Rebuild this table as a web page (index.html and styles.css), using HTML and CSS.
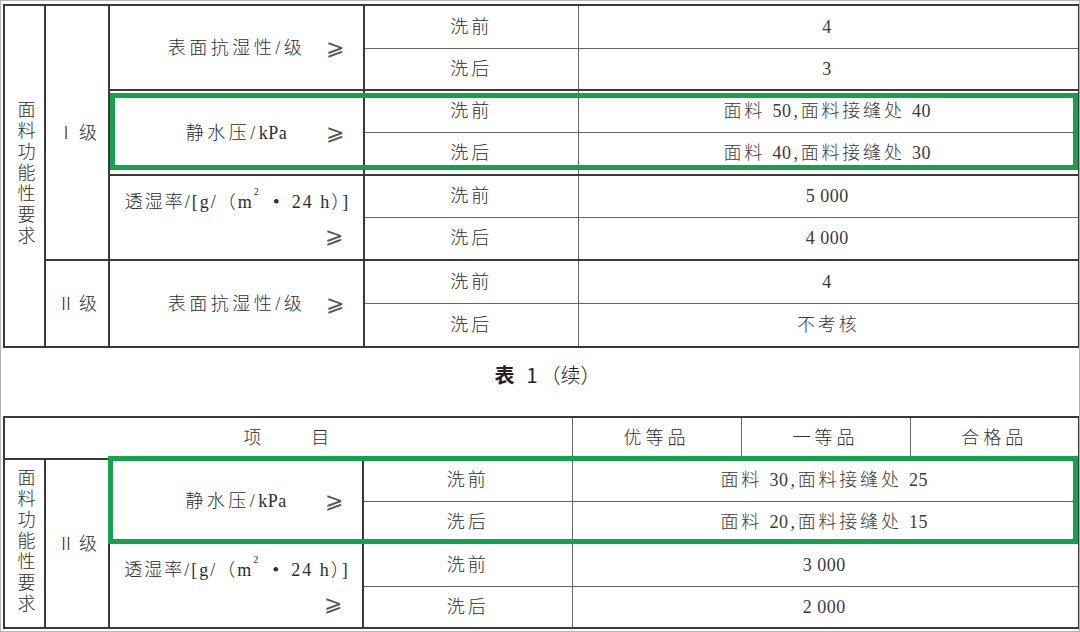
FILE: index.html
```html
<!DOCTYPE html>
<html lang="zh">
<head>
<meta charset="utf-8">
<title>表 1（续）</title>
<link rel="stylesheet" href="styles.css">
</head>
<body>
<div class="page">
  <div class="tbl-wrap tbl-top">
    <table class="spec">
      <colgroup>
        <col class="c-vert"><col class="c-lvl"><col class="c-item"><col class="c-wash-a"><col class="c-val-a">
      </colgroup>
      <tr class="r43">
        <td class="vert" rowspan="8"><span class="vtext">面料功能性要求</span></td>
        <td class="lvl" rowspan="6">Ⅰ级</td>
        <td class="item" rowspan="2"><div class="lab"><span class="t">表面抗湿性/级</span><span class="ge">⩾</span></div></td>
        <td class="wash">洗前</td>
        <td class="val">4</td>
      </tr>
      <tr class="r42">
        <td class="wash">洗后</td>
        <td class="val">3</td>
      </tr>
      <tr class="r42 grp">
        <td class="item" rowspan="2"><div class="lab"><span class="t">静水压/<span class="lat">kPa</span></span><span class="ge">⩾</span></div></td>
        <td class="wash">洗前</td>
        <td class="val">面料 <span class="num">50</span>,面料接缝处 <span class="num">40</span></td>
      </tr>
      <tr class="r43">
        <td class="wash">洗后</td>
        <td class="val">面料 <span class="num">40</span>,面料接缝处 <span class="num">30</span></td>
      </tr>
      <tr class="r42 grp">
        <td class="item" rowspan="2"><div class="lab2"><div class="t">透湿率/[g/（m<sup>2</sup> <span class="dot">·</span> 24 h）]</div><div class="ge">⩾</div></div></td>
        <td class="wash">洗前</td>
        <td class="val"><span class="num">5 000</span></td>
      </tr>
      <tr class="r43">
        <td class="wash">洗后</td>
        <td class="val"><span class="num">4 000</span></td>
      </tr>
      <tr class="r43 grp">
        <td class="lvl" rowspan="2">Ⅱ级</td>
        <td class="item" rowspan="2"><div class="lab"><span class="t">表面抗湿性/级</span><span class="ge">⩾</span></div></td>
        <td class="wash">洗前</td>
        <td class="val">4</td>
      </tr>
      <tr class="r44">
        <td class="wash">洗后</td>
        <td class="val">不考核</td>
      </tr>
    </table>
    <div class="mark mark-top"></div>
  </div>

  <div class="caption"><span class="cap-b">表</span><span class="cap-n">1</span><span class="cap-l">（续）</span></div>

  <div class="tbl-wrap tbl-bot">
    <table class="spec">
      <colgroup>
        <col class="c-vert"><col class="c-lvl"><col class="c-item-b"><col class="c-wash-b"><col class="c-grade"><col class="c-grade"><col class="c-grade">
      </colgroup>
      <tr class="r42 head">
        <td colspan="4" class="proj"><span>项</span><span>目</span></td>
        <td>优等品</td>
        <td>一等品</td>
        <td>合格品</td>
      </tr>
      <tr class="r42 grp">
        <td class="vert" rowspan="4"><span class="vtext">面料功能性要求</span></td>
        <td class="lvl" rowspan="4">Ⅱ级</td>
        <td class="item" rowspan="2"><div class="lab"><span class="t">静水压/<span class="lat">kPa</span></span><span class="ge">⩾</span></div></td>
        <td class="wash">洗前</td>
        <td class="val" colspan="3">面料 <span class="num">30</span>,面料接缝处 <span class="num">25</span></td>
      </tr>
      <tr class="r42">
        <td class="wash">洗后</td>
        <td class="val" colspan="3">面料 <span class="num">20</span>,面料接缝处 <span class="num">15</span></td>
      </tr>
      <tr class="r43 grp">
        <td class="item" rowspan="2"><div class="lab2"><div class="t">透湿率/[g/（m<sup>2</sup> <span class="dot">·</span> 24 h）]</div><div class="ge">⩾</div></div></td>
        <td class="wash">洗前</td>
        <td class="val" colspan="3"><span class="num">3 000</span></td>
      </tr>
      <tr class="r42">
        <td class="wash">洗后</td>
        <td class="val" colspan="3"><span class="num">2 000</span></td>
      </tr>
    </table>
    <div class="mark mark-bot"></div>
  </div>
</div>
</body>
</html>
```

FILE: styles.css
```css
html, body {
  margin: 0;
  padding: 0;
  background: #ffffff;
}

.page {
  width: 1080px;
  height: 632px;
  box-sizing: border-box;
  border: 1px solid #b4b4b4;
  padding: 3px 1px 0 2px;
  overflow: hidden;
  font-family: "Liberation Serif", "Noto Sans CJK SC", serif;
  font-weight: 300;
  color: #2e2e2e;
  background: #ffffff;
}

.tbl-wrap {
  position: relative;
  width: 1075px;
}

.spec {
  width: 1075px;
  table-layout: fixed;
  border-collapse: collapse;
  border: 2px solid #3a3a3a;
  font-size: 18px;
  letter-spacing: 2px;
}

.c-vert { width: 41px; }
.c-lvl { width: 64px; }
.c-item { width: 255px; }
.c-item-b { width: 254px; }
.c-wash-a { width: 214px; }
.c-val-a { width: 501px; }
.c-wash-b { width: 209px; }
.c-grade { width: 169px; }

.spec td {
  border: 1px solid #666666;
  padding: 0;
  text-align: center;
  vertical-align: middle;
  line-height: 22px;
}

.spec tr.grp td {
  border-top: 2px solid #3a3a3a;
}

.spec td.vert,
.spec td.lvl,
.spec td.item {
  border-left: 2px solid #3a3a3a;
  border-right: 2px solid #3a3a3a;
}

.r42 { height: 42px; }
.r43 { height: 43px; }
.r44 { height: 44px; }

.vtext {
  display: inline-block;
  writing-mode: vertical-rl;
  line-height: 18px;
  letter-spacing: 3px;
}

.lvl {
  letter-spacing: 4px;
  padding-left: 4px !important;
}

.lab {
  display: grid;
  grid-template-columns: 1fr auto 1fr;
  align-items: center;
  letter-spacing: 3.5px;
}

.lab .t {
  grid-column: 2;
}

.lat {
  letter-spacing: 0.5px;
}

.num {
  letter-spacing: 0.5px;
  margin-right: 2px;
}

.lab .ge,
.lab2 .ge {
  font-family: "DejaVu Sans", "Noto Sans CJK SC", sans-serif;
  font-size: 22px;
  color: #555555;
  letter-spacing: 0;
}

.lab .ge {
  grid-column: 3;
  justify-self: end;
  margin-right: 19px;
}

.lab2 {
  display: flex;
  flex-direction: column;
  letter-spacing: 2px;
}

.lab2 .t {
  line-height: 34px;
  padding-left: 2px;
  white-space: nowrap;
}

.lab2 .ge {
  line-height: 34px;
  text-align: right;
  padding-right: 20px;
}

.dot {
  font-family: "Noto Sans CJK SC", sans-serif;
  font-weight: 700;
  letter-spacing: 0;
}

sup {
  font-size: 10px;
  vertical-align: top;
  line-height: 18px;
}

.wash {
  letter-spacing: 3px;
}

.val {
  color: #3a3a3a;
  letter-spacing: 2.8px;
}

.head td {
  letter-spacing: 4px;
}

.proj {
  text-align: center;
}

.proj span + span {
  margin-left: 46px;
}

.caption {
  height: 68px;
  box-sizing: border-box;
  padding-top: 14px;
  padding-left: 14px;
  text-align: center;
  font-family: "Noto Sans CJK SC", sans-serif;
  font-size: 20px;
  line-height: 26px;
  color: #222222;
}

.cap-b {
  font-weight: 700;
}

.cap-n {
  font-weight: 400;
  margin-left: 12px;
}

.cap-l {
  font-weight: 300;
  margin-left: 3px;
}

.mark {
  position: absolute;
  border: 5px solid #17a04e;
  box-sizing: border-box;
  pointer-events: none;
}

.mark-top {
  left: 107px;
  top: 89px;
  width: 968px;
  height: 77px;
}

.mark-bot {
  left: 105px;
  top: 40px;
  width: 970px;
  height: 88px;
}
```
